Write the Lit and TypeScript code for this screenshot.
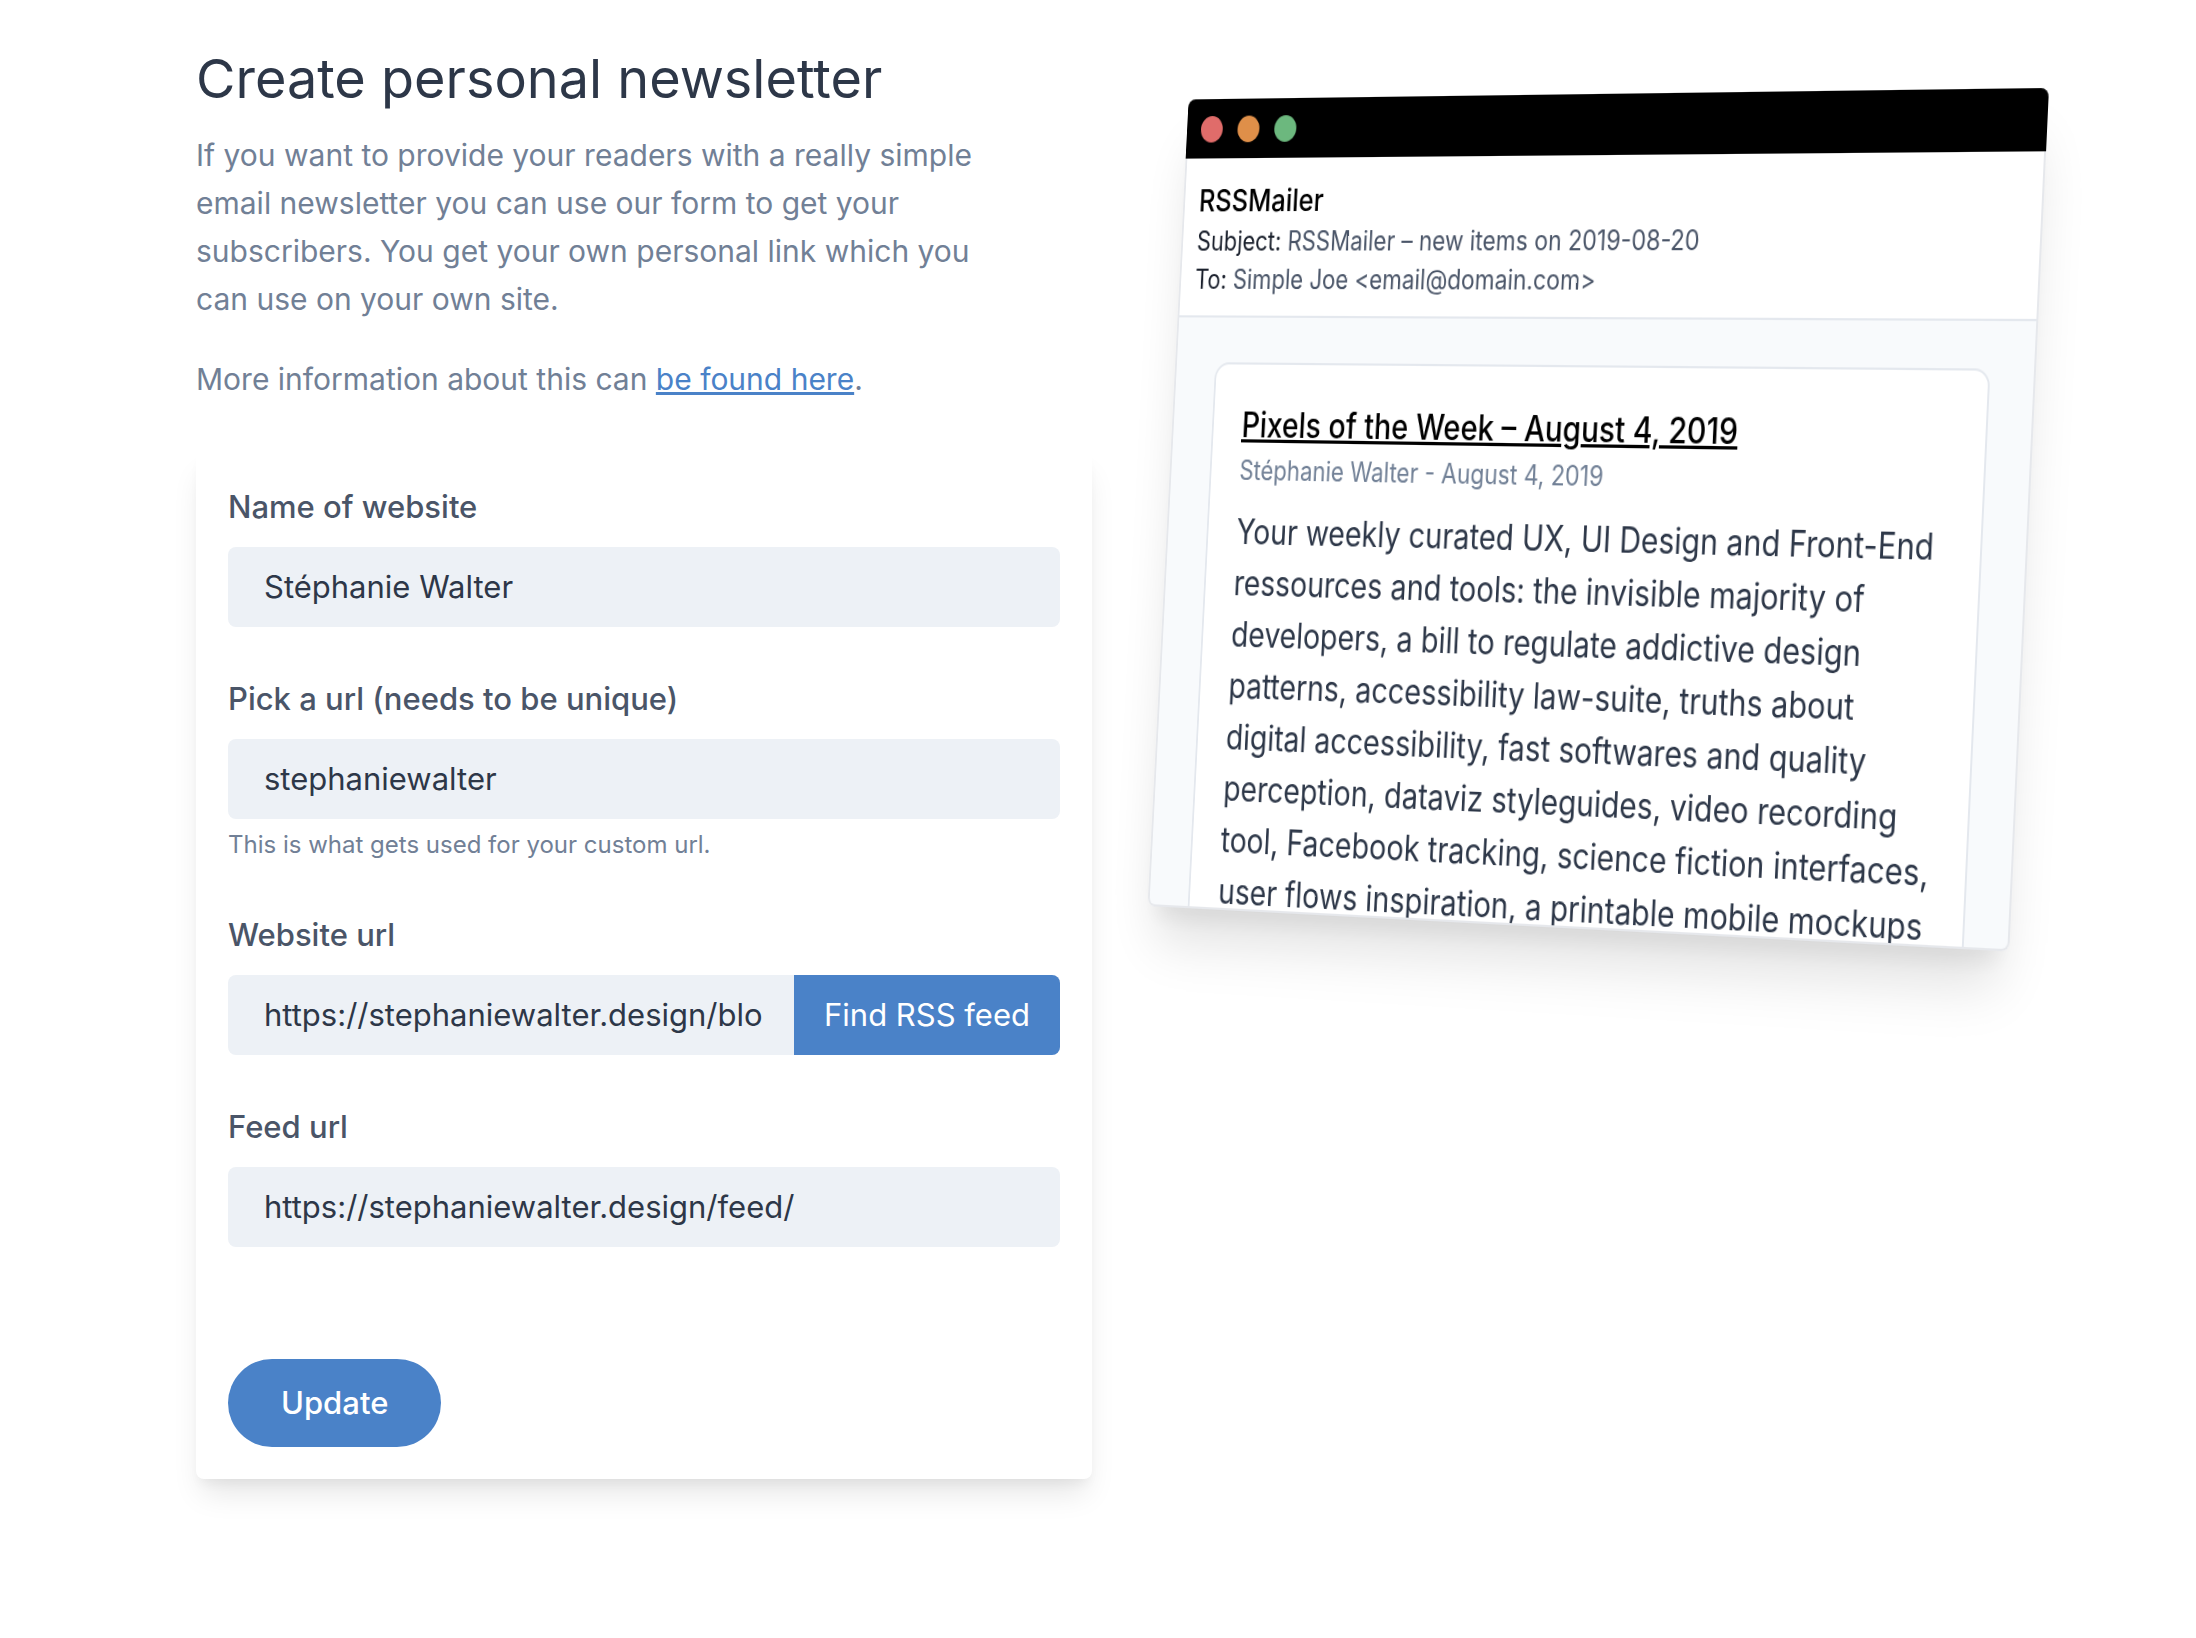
import { LitElement, html, css, nothing } from "lit";
import { customElement, property } from "lit/decorators.js";

const sans = css`Inter, "Liberation Sans", sans-serif`;

@customElement("form-field")
class FormField extends LitElement {
  @property() label = "";
  @property() name = "";
  @property() value = "";
  @property() hint = "";
  @property() action = "";

  static styles = css`
    :host {
      display: block;
    }
    .label {
      display: block;
      margin-bottom: 16px;
      font-size: 31px;
      line-height: 48px;
      font-weight: 500;
      color: #4a5568;
    }
    .row {
      display: flex;
      height: 80px;
      border-radius: 8px;
      overflow: hidden;
      background: #edf1f6;
    }
    .input {
      flex: 1;
      min-width: 0;
      box-sizing: border-box;
      padding: 0 24px 0 36px;
      border: 0;
      border-radius: 0;
      outline: 0;
      background: transparent;
      font: 400 31px/48px ${sans};
      color: #2d3748;
    }
    .action {
      padding: 0 30px;
      border: 0;
      background: #4a82c8;
      color: #fff;
      font: 400 31px/48px ${sans};
      cursor: pointer;
    }
    .hint {
      margin: 8px 0 0;
      font-size: 24px;
      line-height: 36px;
      color: #718096;
    }
  `;

  render() {
    return html`
      <label class="label" for=${this.name}>${this.label}</label>
      <div class="row">
        <input class="input" id=${this.name} name=${this.name} type="text" .value=${this.value} />
        ${this.action ? html`<button class="action" type="button">${this.action}</button>` : nothing}
      </div>
      ${this.hint ? html`<p class="hint">${this.hint}</p>` : nothing}
    `;
  }
}

@customElement("mail-preview")
class MailPreview extends LitElement {
  static styles = css`
    :host {
      display: block;
    }
    .window {
      display: flex;
      flex-direction: column;
      max-height: 760px;
      border-radius: 8px;
      background: #fff;
      box-shadow: 0 40px 50px -10px rgba(0, 0, 0, 0.12), 0 20px 20px -10px rgba(0, 0, 0, 0.06);
      transform: perspective(8066px) rotateX(4.36deg) rotateY(-32.45deg) rotateZ(3.29deg) scale(1.1);
    }
    .bar {
      flex: none;
      display: flex;
      align-items: center;
      gap: 17px;
      height: 56px;
      padding: 0 16px;
      border-radius: 8px 8px 0 0;
      background: #000;
    }
    .dot {
      width: 25px;
      height: 25px;
      border-radius: 50%;
    }
    .red {
      background: #e06c6a;
    }
    .orange {
      background: #df8f49;
    }
    .green {
      background: #6cb87e;
    }
    .mail {
      flex: 1;
      min-height: 0;
      overflow: hidden;
      border: 2px solid #e6e8ec;
      border-top: 0;
      border-radius: 0 0 8px 8px;
      background: #f8fafc;
    }
    .head {
      padding: 20px 16px 16px;
      border-bottom: 2px solid #e4e8ee;
      background: #fff;
      font-size: 25px;
      line-height: 36px;
      color: #4a5568;
    }
    .from {
      font-size: 29px;
      line-height: 40px;
      font-weight: 500;
      color: #000;
    }
    .key {
      color: #1a202c;
    }
    .body {
      padding: 42px 44px;
    }
    .item {
      padding: 33px 32px;
      border: 2px solid #e4e8ee;
      border-radius: 16px;
      background: #fff;
    }
    .title {
      margin: 0;
      font-size: 32px;
      line-height: 48px;
      font-weight: 500;
    }
    .title a {
      color: #000;
    }
    .meta {
      font-size: 25px;
      line-height: 36px;
      color: #718096;
    }
    .text {
      margin: 16px 0 0;
      font-size: 32px;
      line-height: 48px;
      color: #2d3748;
    }
  `;

  render() {
    return html`
      <article class="window">
        <div class="bar">
          <span class="dot red"></span>
          <span class="dot orange"></span>
          <span class="dot green"></span>
        </div>
        <div class="mail">
          <header class="head">
            <div class="from">RSSMailer</div>
            <div><span class="key">Subject:</span> RSSMailer – new items on 2019-08-20</div>
            <div><span class="key">To:</span> Simple Joe &lt;email@domain.com&gt;</div>
          </header>
          <div class="body">
            <section class="item">
              <h2 class="title"><a href="#">Pixels of the Week – August 4, 2019</a></h2>
              <div class="meta">Stéphanie Walter - August 4, 2019</div>
              <p class="text">
                Your weekly curated UX, UI Design and Front-End ressources and tools: the invisible
                majority of developers, a bill to regulate addictive design patterns, accessibility
                law-suite, truths about digital accessibility, fast softwares and quality
                perception, dataviz styleguides, video recording tool, Facebook tracking, science
                fiction interfaces, user flows inspiration, a printable mobile mockups
              </p>
            </section>
          </div>
        </div>
      </article>
    `;
  }
}

@customElement("app-root")
class AppRoot extends LitElement {
  static styles = css`
    :host {
      display: block;
      min-height: 100vh;
      background: #fff;
      font-family: ${sans};
    }
    .page {
      display: grid;
      grid-template-columns: 28fr 29fr;
      align-items: start;
      gap: 28px;
      padding: 43px 148px 60px 196px;
    }
    .heading {
      margin: 0 0 16px;
      font-size: 54px;
      line-height: 72px;
      font-weight: 400;
      color: #2d3748;
    }
    .lead {
      margin: 0 0 32px;
      max-width: 820px;
      font-size: 30px;
      line-height: 48px;
      color: #718096;
    }
    .lead a {
      color: #4a82c8;
    }
    .card {
      display: flex;
      flex-direction: column;
      align-items: stretch;
      gap: 48px;
      margin-top: 48px;
      padding: 32px;
      border-radius: 8px;
      background: #fff;
      box-shadow: 0 20px 30px -6px rgba(0, 0, 0, 0.1), 0 8px 12px -4px rgba(0, 0, 0, 0.05);
    }
    .submit {
      align-self: flex-start;
      height: 88px;
      margin-top: 64px;
      padding: 0 53px;
      border: 0;
      border-radius: 44px;
      background: #4a82c8;
      color: #fff;
      font: 500 31px/48px ${sans};
      cursor: pointer;
    }
    .preview {
      margin-top: 87px;
    }
  `;

  render() {
    return html`
      <main class="page">
        <section>
          <h1 class="heading">Create personal newsletter</h1>
          <p class="lead">
            If you want to provide your readers with a really simple email newsletter you can use
            our form to get your subscribers. You get your own personal link which you can use on
            your own site.
          </p>
          <p class="lead">More information about this can <a href="#">be found here</a>.</p>
          <form class="card" @submit=${(e: Event) => e.preventDefault()}>
            <form-field label="Name of website" name="site" value="Stéphanie Walter"></form-field>
            <form-field
              label="Pick a url (needs to be unique)"
              name="slug"
              value="stephaniewalter"
              hint="This is what gets used for your custom url."
            ></form-field>
            <form-field
              label="Website url"
              name="url"
              value="https://stephaniewalter.design/blo"
              action="Find RSS feed"
            ></form-field>
            <form-field label="Feed url" name="feed" value="https://stephaniewalter.design/feed/"></form-field>
            <button class="submit" type="submit">Update</button>
          </form>
        </section>
        <mail-preview class="preview"></mail-preview>
      </main>
    `;
  }
}
